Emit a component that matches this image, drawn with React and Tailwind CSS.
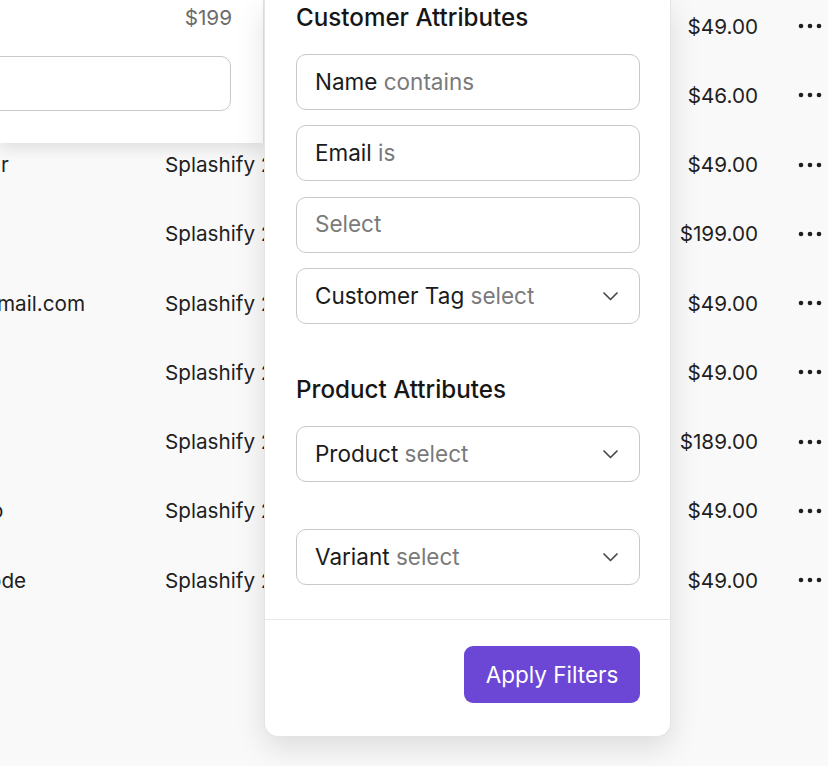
import React from "react";

const rows = [
  { left: "", leftCls: "", product: "", price: "$49.00" },
  { left: "", leftCls: "", product: "", price: "$46.00" },
  { left: "r", leftCls: "ml-[1px]", product: "Splashify 2024", price: "$49.00" },
  { left: "", leftCls: "", product: "Splashify 2024", price: "$199.00" },
  { left: "mail.com", leftCls: "ml-[-3px]", product: "Splashify 2024", price: "$49.00" },
  { left: "", leftCls: "", product: "Splashify 2024", price: "$49.00" },
  { left: "", leftCls: "", product: "Splashify 2024", price: "$189.00" },
  { left: "o", leftCls: "ml-[-9px]", product: "Splashify 2024", price: "$49.00" },
  { left: "ode", leftCls: "ml-[-11px]", product: "Splashify 2024", price: "$49.00" },
];

function Dots() {
  return (
    <svg width="24" height="6" viewBox="0 0 24 6" className="text-[#1f1f1f]">
      <circle cx="3" cy="3" r="2.3" fill="currentColor" />
      <circle cx="12" cy="3" r="2.3" fill="currentColor" />
      <circle cx="21" cy="3" r="2.3" fill="currentColor" />
    </svg>
  );
}

function Chevron() {
  return (
    <svg width="17" height="12" viewBox="0 0 17 12" fill="none" className="text-[#4a4a4a]">
      <path d="M2 3l6.5 6.5L15 3" stroke="currentColor" strokeWidth="1.7" strokeLinecap="round" strokeLinejoin="round" />
    </svg>
  );
}

function Field({ label, hint, chevron }) {
  return (
    <div className="flex h-[56px] items-center justify-between rounded-[10px] border-[1.5px] border-[#c9c9c9] bg-white pl-[18px] pr-[20px] text-[22.5px] leading-none">
      <span className="whitespace-nowrap">
        {label && <span className="text-[#1b1b1b]">{label} </span>}
        <span className="text-[#7a7a7a]">{hint}</span>
      </span>
      {chevron && <Chevron />}
    </div>
  );
}

export default function App() {
  return (
    <div className="relative h-[766px] w-[828px] overflow-hidden bg-[#f9f9f9] font-['Inter',sans-serif] text-[#1f1f1f]">
      {/* background table */}
      <div className="mt-[-8.6px] flex flex-col">
        {rows.map((r, i) => (
          <div key={i} className="flex h-[69.25px] items-center text-[20.7px]">
            <div className="w-[165px] overflow-hidden whitespace-nowrap">
              <span className={"block " + r.leftCls}>{r.left || "\u00a0"}</span>
            </div>
            <div className="w-[450px] whitespace-nowrap">{r.product || "\u00a0"}</div>
            <div className="w-[143px] text-right">{r.price}</div>
            <div className="ml-[40px] flex items-center">
              <Dots />
            </div>
          </div>
        ))}
      </div>

      {/* top-left popover */}
      <div className="absolute left-0 top-0 flex h-[143px] w-[264px] flex-col border-r border-[#e2e2e2] bg-white shadow-[0_6px_14px_rgba(0,0,0,0.10)]">
        <div className="flex h-[36px] items-center justify-end pr-[31px] text-[20.7px] text-[#6b6b6b]">$199</div>
        <div className="ml-[-12px] mt-[20px] h-[55px] w-[243px] rounded-[10px] border-[1.5px] border-[#c9c9c9]" />
      </div>

      {/* filter panel */}
      <div className="absolute left-[264px] top-0 flex h-[737px] w-[407px] flex-col rounded-b-[14px] border border-t-0 border-[#e4e4e4] bg-white shadow-[0_10px_30px_rgba(0,0,0,0.12)]">
        <div className="pl-[31px] pr-[30px]">
          <h2 className="mt-[4px] h-[28px] whitespace-nowrap text-[24.2px] font-medium leading-[28px] text-[#161616]">Customer Attributes</h2>
          <div className="mt-[22px] flex flex-col gap-[15.3px]">
            <Field label="Name" hint="contains" />
            <Field label="Email" hint="is" />
            <Field hint="Select" />
            <Field label="Customer Tag" hint="select" chevron />
          </div>
          <h2 className="mt-[52px] h-[28px] whitespace-nowrap text-[24.2px] font-medium leading-[28px] text-[#161616]">Product Attributes</h2>
          <div className="mt-[22px]">
            <Field label="Product" hint="select" chevron />
          </div>
          <div className="mt-[47px]">
            <Field label="Variant" hint="select" chevron />
          </div>
        </div>
        <div className="mt-[34px] border-t border-[#e8e8e8]" />
        <div className="flex justify-end pl-[31px] pr-[30px] pt-[26px]">
          <button className="flex h-[57px] w-[176px] items-center justify-center rounded-[9px] bg-[#6c47d5] text-[22.5px] text-white">
            Apply Filters
          </button>
        </div>
      </div>
    </div>
  );
}
